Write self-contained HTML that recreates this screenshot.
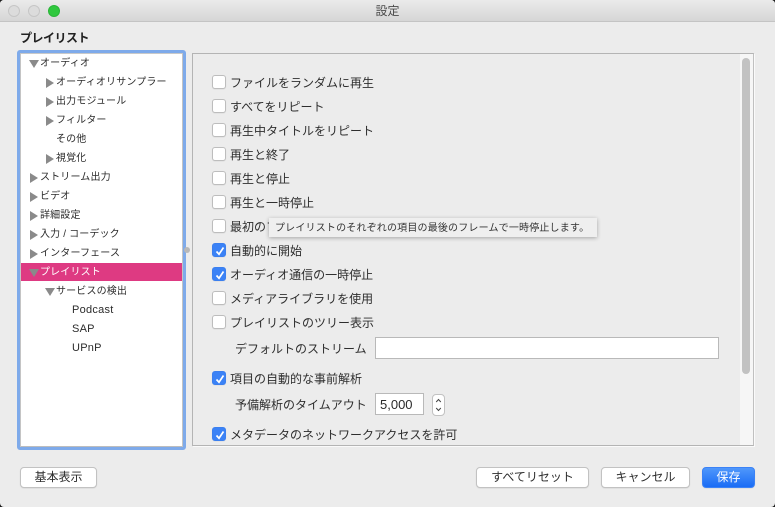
<!DOCTYPE html>
<html lang="ja">
<head>
<meta charset="utf-8">
<style>
html,body{margin:0;padding:0;width:775px;height:507px;overflow:hidden;background:#1a1a1a;}
*{box-sizing:border-box;}
body{font-family:"Liberation Sans","Noto Sans CJK JP",sans-serif;color:#2a2a2a;}
#win{position:absolute;left:0;top:0;width:775px;height:507px;background:#ececec;border-radius:4px;overflow:hidden;}
#bar{position:absolute;left:0;top:0;width:775px;height:22px;background:linear-gradient(#ebebeb,#d6d6d6);border-bottom:1px solid #c4c4c4;text-align:center;font-size:12px;line-height:23px;color:#4a4a4a;}
.dot{position:absolute;top:5px;width:12px;height:12px;border-radius:50%;background:#dcdcdc;border:1px solid #c6c6c6;}
.t{position:absolute;white-space:nowrap;}
#title{left:20px;top:30px;font-size:12px;font-weight:bold;line-height:17px;color:#222;letter-spacing:-.5px;}
#tree{position:absolute;left:17px;top:50px;width:169px;height:400px;background:#fff;border:3px solid #7eaaea;border-radius:3px;box-shadow:inset 1px 0 0 #c4c4c4,inset -1px 0 0 #c4c4c4,inset 0 -1px 0 #bdbdbd,inset 0 1px 0 #c9c9c9;}
.n{position:absolute;font-size:10px;line-height:14px;white-space:nowrap;color:#2b2b2b;letter-spacing:.15px;}
.tr{position:absolute;width:8px;height:10px;background:#8a8a8a;clip-path:polygon(0 0,100% 50%,0 100%);}
.td{position:absolute;width:10px;height:8px;background:#8a8a8a;clip-path:polygon(0 0,100% 0,50% 100%);}
#sel{position:absolute;left:21px;top:263px;width:161px;height:18px;background:#de3a82;}
#panel{position:absolute;left:192px;top:53px;width:562px;height:393px;background:#ececec;border:1px solid #b4b4b4;border-right-color:#c0c0c0;box-shadow:1px 1px 0 #fafafa;}
#track{position:absolute;left:739px;top:54px;width:14px;height:391px;background:#f6f6f6;border-left:1px solid #ececec;}
#thumb{position:absolute;left:742px;top:58px;width:8px;height:316px;background:#c2c2c2;border-radius:4px;}
.cb{position:absolute;left:212px;width:14px;height:14px;background:#fff;border:1px solid #bdbdbd;border-radius:3px;box-shadow:0 .5px 1px rgba(0,0,0,.08);}
.cb.on{background:#3b82f6;border-color:#3b7fef;}
.cb svg{position:absolute;left:1px;top:1px;}
.l{position:absolute;left:230px;font-size:12px;line-height:17px;white-space:nowrap;color:#2e2e2e;margin-top:1px;}
#tip{position:absolute;left:269px;top:218px;width:328px;height:19px;background:#efefef;box-shadow:0 1px 4px rgba(0,0,0,.3);font-size:10px;line-height:19px;padding-left:6px;padding-top:1px;white-space:nowrap;color:#333;letter-spacing:.18px;}
.inp{position:absolute;background:#fff;border:1px solid #b9b9b9;}
.btn{position:absolute;top:467px;height:21px;background:#fff;border:1px solid #c2c2c2;border-radius:4px;font-size:12px;line-height:19px;text-align:center;color:#2e2e2e;box-shadow:0 .5px 1px rgba(0,0,0,.1);white-space:nowrap;}
.en{font-size:11px;letter-spacing:.25px;}
</style>
</head>
<body>
<div id="win">
  <div id="bar">設定</div>
  <div class="dot" style="left:8px"></div>
  <div class="dot" style="left:28px"></div>
  <div class="dot" style="left:48px;background:#30c83e;border-color:#2ab538"></div>

  <div id="title" class="t">プレイリスト</div>

  <div id="tree"></div>
  <div id="sel"></div>

  <div class="td" style="left:29px;top:60px"></div><div class="n" style="left:40px;top:57px">オーディオ</div>
  <div class="tr" style="left:46px;top:78px"></div><div class="n" style="left:56px;top:76px">オーディオリサンプラー</div>
  <div class="tr" style="left:46px;top:97px"></div><div class="n" style="left:56px;top:95px">出力モジュール</div>
  <div class="tr" style="left:46px;top:116px"></div><div class="n" style="left:56px;top:114px">フィルター</div>
  <div class="n" style="left:56px;top:133px">その他</div>
  <div class="tr" style="left:46px;top:154px"></div><div class="n" style="left:56px;top:152px">視覚化</div>
  <div class="tr" style="left:30px;top:173px"></div><div class="n" style="left:40px;top:171px">ストリーム出力</div>
  <div class="tr" style="left:30px;top:192px"></div><div class="n" style="left:40px;top:190px">ビデオ</div>
  <div class="tr" style="left:30px;top:211px"></div><div class="n" style="left:40px;top:209px">詳細設定</div>
  <div class="tr" style="left:30px;top:230px"></div><div class="n" style="left:40px;top:228px">入力 / コーデック</div>
  <div class="tr" style="left:30px;top:249px"></div><div class="n" style="left:40px;top:247px">インターフェース</div>
  <div class="td" style="left:29px;top:269px"></div><div class="n" style="left:40px;top:266px;color:#fff">プレイリスト</div>
  <div class="td" style="left:45px;top:288px"></div><div class="n" style="left:56px;top:285px">サービスの検出</div>
  <div class="n en" style="left:72px;top:303px">Podcast</div>
  <div class="n en" style="left:72px;top:322px">SAP</div>
  <div class="n en" style="left:72px;top:341px">UPnP</div>

  <div style="position:absolute;left:184px;top:247px;width:6px;height:6px;border-radius:50%;background:#b8b8b8"></div>

  <div id="panel"></div>
  <div id="track"></div>
  <div id="thumb"></div>

  <div class="cb" style="top:75px"></div><div class="l" style="top:74px">ファイルをランダムに再生</div>
  <div class="cb" style="top:99px"></div><div class="l" style="top:98px">すべてをリピート</div>
  <div class="cb" style="top:123px"></div><div class="l" style="top:122px">再生中タイトルをリピート</div>
  <div class="cb" style="top:147px"></div><div class="l" style="top:146px">再生と終了</div>
  <div class="cb" style="top:171px"></div><div class="l" style="top:170px">再生と停止</div>
  <div class="cb" style="top:195px"></div><div class="l" style="top:194px">再生と一時停止</div>
  <div class="cb" style="top:219px"></div><div class="l" style="top:218px">最初のフレームで一時停止</div>
  <div class="cb on" style="top:243px"><svg width="12" height="12" viewBox="0 0 12 12"><path d="M2.5 6.5 L5 9.2 L9.5 2.5" fill="none" stroke="#fff" stroke-width="1.7"/></svg></div><div class="l" style="top:242px">自動的に開始</div>
  <div class="cb on" style="top:267px"><svg width="12" height="12" viewBox="0 0 12 12"><path d="M2.5 6.5 L5 9.2 L9.5 2.5" fill="none" stroke="#fff" stroke-width="1.7"/></svg></div><div class="l" style="top:266px">オーディオ通信の一時停止</div>
  <div class="cb" style="top:291px"></div><div class="l" style="top:290px">メディアライブラリを使用</div>
  <div class="cb" style="top:315px"></div><div class="l" style="top:314px">プレイリストのツリー表示</div>
  <div class="l" style="left:235px;top:340px">デフォルトのストリーム</div>
  <div class="inp" style="left:375px;top:337px;width:344px;height:22px"></div>
  <div class="cb on" style="top:371px"><svg width="12" height="12" viewBox="0 0 12 12"><path d="M2.5 6.5 L5 9.2 L9.5 2.5" fill="none" stroke="#fff" stroke-width="1.7"/></svg></div><div class="l" style="top:370px">項目の自動的な事前解析</div>
  <div class="l" style="left:235px;top:396px">予備解析のタイムアウト</div>
  <div class="inp" style="left:375px;top:393px;width:49px;height:22px;font-size:13px;line-height:21px;padding-left:4px;color:#2a2a2a">5,000</div>
  <div style="position:absolute;left:432px;top:394px;width:13px;height:22px;background:#fff;border:1px solid #c2c2c2;border-radius:4px"><svg width="11" height="20" viewBox="0 0 11 20" style="position:absolute;left:0;top:0"><path d="M3.2 7 L5.5 4.5 L7.8 7 M3.2 13 L5.5 15.5 L7.8 13" fill="none" stroke="#444" stroke-width="1"/></svg></div>
  <div class="cb on" style="top:427px"><svg width="12" height="12" viewBox="0 0 12 12"><path d="M2.5 6.5 L5 9.2 L9.5 2.5" fill="none" stroke="#fff" stroke-width="1.7"/></svg></div><div class="l" style="top:426px">メタデータのネットワークアクセスを許可</div>

  <div id="tip">プレイリストのそれぞれの項目の最後のフレームで一時停止します。</div>

  <div class="btn" style="left:20px;width:77px">基本表示</div>
  <div class="btn" style="left:476px;width:113px">すべてリセット</div>
  <div class="btn" style="left:601px;width:89px">キャンセル</div>
  <div class="btn" style="left:702px;width:53px;background:linear-gradient(#4f97fb,#1a6cf5);border-color:#3b82f6;color:#fff">保存</div>
</div>
</body>
</html>
